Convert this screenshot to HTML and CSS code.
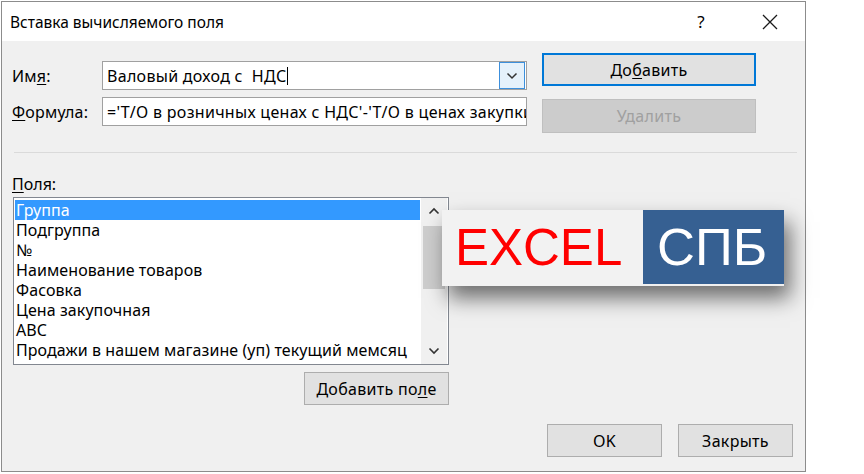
FILE: index.html
```html
<!DOCTYPE html>
<html lang="ru">
<head>
<meta charset="utf-8">
<title>Вставка вычисляемого поля</title>
<link rel="stylesheet" href="styles.css">
</head>
<body>
<div class="dialog">
  <div class="titlebar">
    <span class="title">Вставка вычисляемого поля</span>
    <span class="help">?</span>
    <span class="close">
      <svg width="16" height="16" viewBox="0 0 16 16"><path d="M1 1L15 15M15 1L1 15" stroke="#1a1a1a" stroke-width="1.3" fill="none"/></svg>
    </span>
  </div>
  <div class="body">
    <div class="top">
      <div class="form">
        <div class="row">
          <label class="lbl">Им<u>я</u>:</label>
          <div class="input combo">
            <span class="val">Валовый доход с&nbsp; НДС<span class="caret"></span></span>
            <span class="drop">
              <svg width="12" height="8" viewBox="0 0 12 8"><path d="M1.5 1.5L6 6L10.5 1.5" stroke="#333" stroke-width="1.5" fill="none"/></svg>
            </span>
          </div>
        </div>
        <div class="row">
          <label class="lbl"><u>Ф</u>ормула:</label>
          <div class="input">
            <span class="val">='Т/О в розничных ценах с НДС'-'Т/О в ценах закупки'</span>
          </div>
        </div>
      </div>
      <div class="side">
        <div class="btn btn-default">До<u>б</u>авить</div>
        <div class="btn btn-disabled">Удалить</div>
      </div>
    </div>
    <div class="sep"></div>
    <div class="fields-label"><u>П</u>оля:</div>
    <div class="listbox">
      <div class="items">
        <div class="item sel">Группа</div>
        <div class="item">Подгруппа</div>
        <div class="item">№</div>
        <div class="item">Наименование товаров</div>
        <div class="item">Фасовка</div>
        <div class="item">Цена закупочная</div>
        <div class="item">ABC</div>
        <div class="item">Продажи в нашем магазине (уп) текущий мемсяц</div>
      </div>
      <div class="scroll">
        <div class="arrow">
          <svg width="12" height="8" viewBox="0 0 12 8"><path d="M1.5 6.5L6 2L10.5 6.5" stroke="#333" stroke-width="1.6" fill="none"/></svg>
        </div>
        <div class="track"><div class="thumb"></div></div>
        <div class="arrow">
          <svg width="12" height="8" viewBox="0 0 12 8"><path d="M1.5 1.5L6 6L10.5 1.5" stroke="#333" stroke-width="1.6" fill="none"/></svg>
        </div>
      </div>
    </div>
    <div class="addrow">
      <div class="btn btn-add">Добавить по<u>л</u>е</div>
    </div>
    <div class="footer">
      <div class="btn btn-foot">OK</div>
      <div class="btn btn-foot">Закрыть</div>
    </div>
  </div>
</div>
<div class="logo">
  <span class="logo-excel">EXCEL</span>
  <span class="logo-spb">СПБ</span>
</div>
</body>
</html>
```
FILE: styles.css
```css
* { box-sizing: border-box; }
html, body { margin: 0; padding: 0; background: #fff; }
body {
  width: 864px; height: 474px; overflow: hidden; position: relative;
  font-family: "Noto Sans", "Open Sans", sans-serif;
  font-size: 16px; color: #000;
}
u { text-decoration: underline; text-underline-offset: 2px; }
.dialog {
  margin: 1px 0 0 1px;
  width: 805px; height: 471px;
  border: 1px solid #8c8c8c;
  background: #f0f0f0;
  display: flex; flex-direction: column;
}
.titlebar {
  height: 39px; background: #fff;
  display: flex; align-items: center;
  padding-left: 8px;
}
.title { flex: 1; font-size: 15.5px; color: #000; }
.help { width: 20px; font-size: 17px; margin-right: 51px; text-align: center; }
.close { width: 16px; height: 16px; margin-right: 27px; display: flex; }
.body { flex: 1; display: flex; flex-direction: column; padding: 0 9px 0 10px; }
.top { display: flex; }
.form { display: flex; flex-direction: column; gap: 7px; margin-top: 20px; width: 530px; }
.row { display: flex; align-items: center; height: 29px; }
.lbl { width: 90px; padding-left: 0; letter-spacing: 0.2px; }
.input {
  width: 425px; height: 29px; background: #fff;
  border: 1px solid #a0a0a0;
  display: flex; align-items: center; overflow: hidden;
  padding-left: 4px;
}
.val { white-space: nowrap; flex: 1; overflow: hidden; letter-spacing: 0.3px; }
.caret { display: inline-block; width: 1px; height: 18px; background: #000; vertical-align: -3px; margin-left: 1px; }
.combo { padding-right: 1px; }
.drop {
  width: 26px; height: 27px; flex: none;
  background: #e5f1fb; border: 1px solid #3c8fdc;
  display: flex; align-items: center; justify-content: center;
}
.side { display: flex; flex-direction: column; gap: 13px; margin-top: 12px; margin-left: 0; }
.btn {
  display: flex; align-items: center; justify-content: center;
  background: #e1e1e1; border: 1px solid #adadad;
  font-size: 16px; letter-spacing: 0.3px;
}
.btn-default { width: 214px; height: 33px; border: 2px solid #0078d7; }
.btn-disabled { width: 214px; height: 34px; background: #cccccc; border-color: #bfbfbf; color: #a0a0a0; }
.sep { height: 1px; background: #dadada; margin: 19px 0 0 2px; width: 783px; }
.fields-label { margin-top: 21px; padding-left: 0; line-height: 20px; }
.listbox {
  margin-top: 3px; margin-left: 1px;
  width: 436px; height: 168px;
  background: #fff; border: 1px solid #828790;
  display: flex; padding: 2px 1px 2px 1px;
}
.items { flex: 1; display: flex; flex-direction: column; overflow: hidden; }
.item { height: 20px; line-height: 20px; padding-left: 1px; white-space: nowrap; font-size: 16px; letter-spacing: 0.08px; }
.item.sel { background: #3399ff; color: #fff; }
.scroll { width: 26px; background: #f0f0f0; display: flex; flex-direction: column; margin: -2px 0 -2px 1px; }
.arrow { height: 26px; display: flex; align-items: center; justify-content: center; }
.track { flex: 1; padding: 2px 2px 0 2px; }
.thumb { height: 63px; background: #cdcdcd; }
.addrow { display: flex; justify-content: flex-end; width: 437px; margin-top: 7px; }
.btn-add { width: 145px; height: 33px; }
.footer { display: flex; justify-content: flex-end; gap: 16px; margin-top: 19px; padding-right: 3px; }
.btn-foot { width: 115px; height: 33px; }
.logo {
  position: absolute; left: 442px; top: 210px;
  display: flex; align-items: flex-start;
  box-shadow: 6px 12px 20px rgba(0,0,0,0.55);
  font-family: "Liberation Sans", Arial, sans-serif;
}
.logo-excel {
  width: 201px; height: 76px; background: #f2f2f2; color: #ff0000;
  font-size: 51px; line-height: 76px; padding-left: 13px;
}
.logo-spb {
  width: 141px; height: 74px; background: #366092; color: #fff;
  font-size: 52.5px; line-height: 74px; padding-left: 14px;
}
```
